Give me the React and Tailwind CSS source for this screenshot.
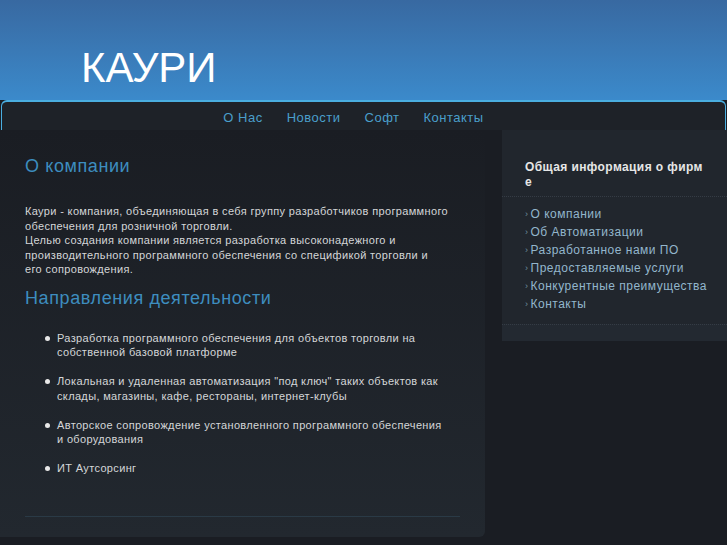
import React from "react";

const nav = ["О Нас", "Новости", "Софт", "Контакты"];

const sideLinks = [
  "О компании",
  "Об Автоматизации",
  "Разработанное нами ПО",
  "Предоставляемые услуги",
  "Конкурентные преимущества",
  "Контакты",
];

const directions = [
  "Разработка программного обеспечения для объектов торговли на собственной базовой платформе",
  "Локальная и удаленная автоматизация  \"под ключ\" таких объектов как склады, магазины, кафе, рестораны, интернет-клубы",
  "Авторское сопровождение установленного программного обеспечения и оборудования",
  "ИТ Аутсорсинг",
];

const App = () => {
  return (
    <div className="min-h-[545px] w-[727px] overflow-hidden bg-[#1a1d23] font-['Liberation_Sans',Arial,sans-serif]">
      {/* header */}
      <div className="h-[100px] bg-gradient-to-b from-[#3869a1] to-[#3b8acb] pl-[81px] pt-[44px]">
        <h1 className="text-[42px] font-normal leading-[48px] text-white">КАУРИ</h1>
      </div>

      {/* nav */}
      <div className="mx-[1px] flex h-[30px] items-center justify-center rounded-t-[6px] border-t-2 border-l border-r border-[#4aaee0] bg-[#1e2228] pr-[20px] pt-[3px]">
        <ul className="flex gap-[24px] text-[13px] tracking-[0.5px] text-[#4a9fcb]">
          {nav.map((item) => (
            <li key={item}>{item}</li>
          ))}
        </ul>
      </div>

      <div className="flex items-start">
        {/* main column */}
        <div className="flex h-[407px] w-[485px] flex-col rounded-br-[6px] bg-gradient-to-b from-[#1a1d23] to-[#22282f] px-[25px] pt-[24px]">
          <h2 className="text-[18px] leading-[24px] tracking-[0.6px] text-[#3d8dbf]">О компании</h2>
          <p className="mt-[26px] w-[430px] text-[11px] leading-[14.5px] tracking-[0.35px] text-[#d4d6d8]">
            Каури - компания, объединяющая в себя группу разработчиков программного обеспечения для розничной торговли.
            <br />
            Целью создания компании является разработка высоконадежного и производительного программного обеспечения со спецификой торговли и
            <br />
            его сопровождения.
          </p>
          <h2 className="mt-[9px] text-[18px] leading-[24px] tracking-[0.6px] text-[#3d8dbf]">Направления деятельности</h2>
          <ul className="mt-[21px] pl-[20px] pr-[15px]">
            {directions.map((d) => (
              <li key={d} className="relative mb-[14.5px] pl-[12px] text-[11px] leading-[14.5px] tracking-[0.35px] text-[#d4d6d8]">
                <span className="absolute left-0 top-[5px] h-[5px] w-[5px] rounded-full bg-[#e8e8e8]" />
                {d}
              </li>
            ))}
          </ul>
          <div className="mt-auto mb-[20px] h-px w-[435px] bg-[#2a3a46]" />
        </div>

        {/* sidebar */}
        <div className="ml-[17px] w-[225px] bg-[#21262d]">
          <h3 className="break-all px-[23px] pt-[30px] text-[12px] font-bold leading-[15px] tracking-[0.4px] text-[#e6e6e6]">
            Общая информация о фирме
          </h3>
          <div className="mt-[6px] border-t border-dotted border-[#353c45]" />
          <ul className="pl-[23px] pr-[4px] pt-[8px] pb-[11px]">
            {sideLinks.map((l) => (
              <li key={l} className="flex items-center whitespace-nowrap text-[12px] leading-[18px] tracking-[0.5px] text-[#93b6cc]">
                <span className="mr-[2px] text-[9px] text-[#6f8ea2]">›</span>
                {l}
              </li>
            ))}
          </ul>
          <div className="h-[17px] border-t border-dotted border-[#353c45] bg-[#232931]" />
        </div>
      </div>
    </div>
  );
};

export default App;
